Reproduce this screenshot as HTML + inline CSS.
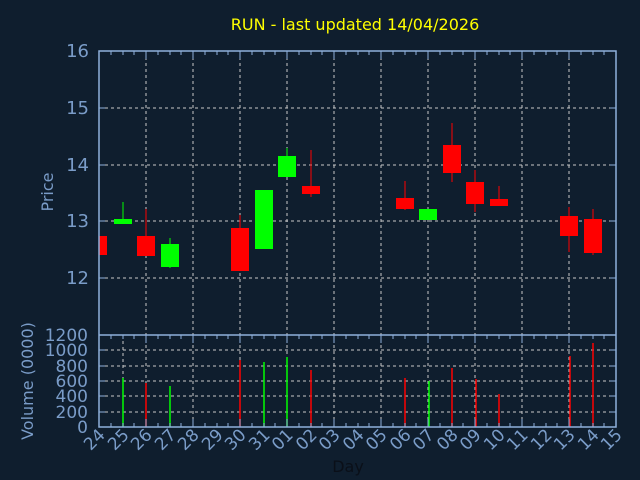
<!DOCTYPE html>
<html><head><style>
html,body{margin:0;padding:0;background:#0f1e2e;}
svg{display:block;font-family:"DejaVu Sans","Liberation Sans",sans-serif;}
</style></head><body>
<svg width="640" height="480" xmlns="http://www.w3.org/2000/svg">
<rect width="640" height="480" fill="#0f1e2e"/>
<text x="355" y="30" fill="#ffff00" font-size="16" text-anchor="middle">RUN - last updated 14/04/2026</text>
<g stroke="#c8c8c8" stroke-width="1" stroke-dasharray="3,3">
<line x1="99" x2="616" y1="108" y2="108"/><line x1="99" x2="616" y1="165" y2="165"/>
<line x1="99" x2="616" y1="221" y2="221"/><line x1="99" x2="616" y1="278" y2="278"/>
<line x1="99" x2="616" y1="350" y2="350"/><line x1="99" x2="616" y1="366" y2="366"/>
<line x1="99" x2="616" y1="381" y2="381"/><line x1="99" x2="616" y1="396" y2="396"/>
<line x1="99" x2="616" y1="412" y2="412"/>
<line x1="146" x2="146" y1="51" y2="427"/><line x1="193" x2="193" y1="51" y2="427"/>
<line x1="240" x2="240" y1="51" y2="427"/><line x1="287" x2="287" y1="51" y2="427"/>
<line x1="334" x2="334" y1="51" y2="427"/><line x1="381" x2="381" y1="51" y2="427"/>
<line x1="428" x2="428" y1="51" y2="427"/><line x1="475" x2="475" y1="51" y2="427"/>
<line x1="522" x2="522" y1="51" y2="427"/><line x1="569" x2="569" y1="51" y2="427"/>
<line x1="123" x2="123" y1="335" y2="427"/>
</g>
<g>
<rect x="99" y="236" width="8" height="19" fill="#ff0000"/>
<line x1="123" x2="123" y1="202" y2="224" stroke="#00ff00"/><rect x="114" y="219" width="18" height="5" fill="#00ff00"/>
<line x1="146" x2="146" y1="209" y2="256" stroke="#ff0000"/><rect x="137" y="236" width="18" height="20" fill="#ff0000"/>
<line x1="170" x2="170" y1="238" y2="268" stroke="#00ff00"/><rect x="161" y="244" width="18" height="23" fill="#00ff00"/>
<line x1="240" x2="240" y1="215" y2="271" stroke="#ff0000"/><rect x="231" y="228" width="18" height="43" fill="#ff0000"/>
<rect x="255" y="190" width="18" height="59" fill="#00ff00"/>
<line x1="287" x2="287" y1="148" y2="177" stroke="#00ff00"/><rect x="278" y="156" width="18" height="21" fill="#00ff00"/>
<line x1="311" x2="311" y1="150" y2="197" stroke="#ff0000"/><rect x="302" y="186" width="18" height="8" fill="#ff0000"/>
<line x1="405" x2="405" y1="181" y2="210" stroke="#ff0000"/><rect x="396" y="198" width="18" height="11" fill="#ff0000"/>
<rect x="419" y="209" width="18" height="11" fill="#00ff00"/>
<line x1="452" x2="452" y1="123" y2="182" stroke="#ff0000"/><rect x="443" y="145" width="18" height="28" fill="#ff0000"/>
<line x1="475" x2="475" y1="170" y2="212" stroke="#ff0000"/><rect x="466" y="182" width="18" height="22" fill="#ff0000"/>
<line x1="499" x2="499" y1="186" y2="206" stroke="#ff0000"/><rect x="490" y="199" width="18" height="7" fill="#ff0000"/>
<line x1="569" x2="569" y1="207" y2="252" stroke="#ff0000"/><rect x="560" y="216" width="18" height="20" fill="#ff0000"/>
<line x1="593" x2="593" y1="209" y2="255" stroke="#ff0000"/><rect x="584" y="219" width="18" height="34" fill="#ff0000"/>
</g>
<g stroke-width="1.5">
<line x1="123" x2="123" y1="378" y2="427" stroke="#00ff00"/>
<line x1="146" x2="146" y1="383" y2="427" stroke="#ff0000"/>
<line x1="170" x2="170" y1="386" y2="427" stroke="#00ff00"/>
<line x1="240" x2="240" y1="360" y2="427" stroke="#ff0000"/>
<line x1="264" x2="264" y1="362" y2="427" stroke="#00ff00"/>
<line x1="287" x2="287" y1="357" y2="427" stroke="#00ff00"/>
<line x1="311" x2="311" y1="370" y2="427" stroke="#ff0000"/>
<line x1="405" x2="405" y1="378" y2="427" stroke="#ff0000"/>
<line x1="429" x2="429" y1="381" y2="427" stroke="#00ff00"/>
<line x1="452" x2="452" y1="368" y2="427" stroke="#ff0000"/>
<line x1="476" x2="476" y1="379" y2="427" stroke="#ff0000"/>
<line x1="499" x2="499" y1="394" y2="427" stroke="#ff0000"/>
<line x1="570" x2="570" y1="356" y2="427" stroke="#ff0000"/>
<line x1="593" x2="593" y1="343" y2="427" stroke="#ff0000"/>
</g>
<g stroke="#8fb0dc" stroke-width="1.5" fill="none">
<rect x="99" y="51" width="517" height="376"/>
<line x1="99" x2="616" y1="335" y2="335"/>
</g>
<g stroke="#8fb0dc" stroke-width="1">
<path d="M99 108h6M99 165h6M99 221h6M99 278h6M616 108h-6M616 165h-6M616 221h-6M616 278h-6
M99 350h6M99 366h6M99 381h6M99 396h6M99 412h6M616 350h-6M616 366h-6M616 381h-6M616 396h-6M616 412h-6"/>
<path d="M146 51v8M193 51v8M240 51v8M287 51v8M334 51v8M381 51v8M428 51v8M475 51v8M522 51v8M569 51v8
M146 335v8M193 335v8M240 335v8M287 335v8M334 335v8M381 335v8M428 335v8M475 335v8M522 335v8M569 335v8
M146 427v-8M193 427v-8M240 427v-8M287 427v-8M334 427v-8M381 427v-8M428 427v-8M475 427v-8M522 427v-8M569 427v-8"/>
<path d="M111 51v4M123 51v4M134 51v4M158 51v4M170 51v4M181 51v4M205 51v4M217 51v4M228 51v4M252 51v4M264 51v4M275 51v4M299 51v4M311 51v4M322 51v4M346 51v4M358 51v4M369 51v4M393 51v4M405 51v4M416 51v4M440 51v4M452 51v4M463 51v4M487 51v4M499 51v4M510 51v4M534 51v4M546 51v4M557 51v4M581 51v4M593 51v4M604 51v4
M111 335v4M123 335v4M134 335v4M158 335v4M170 335v4M181 335v4M205 335v4M217 335v4M228 335v4M252 335v4M264 335v4M275 335v4M299 335v4M311 335v4M322 335v4M346 335v4M358 335v4M369 335v4M393 335v4M405 335v4M416 335v4M440 335v4M452 335v4M463 335v4M487 335v4M499 335v4M510 335v4M534 335v4M546 335v4M557 335v4M581 335v4M593 335v4M604 335v4
M111 427v-4M123 427v-4M134 427v-4M158 427v-4M170 427v-4M181 427v-4M205 427v-4M217 427v-4M228 427v-4M252 427v-4M264 427v-4M275 427v-4M299 427v-4M311 427v-4M322 427v-4M346 427v-4M358 427v-4M369 427v-4M393 427v-4M405 427v-4M416 427v-4M440 427v-4M452 427v-4M463 427v-4M487 427v-4M499 427v-4M510 427v-4M534 427v-4M546 427v-4M557 427v-4M581 427v-4M593 427v-4M604 427v-4"/>
</g>
<g fill="#7a9cc8" font-size="18" text-anchor="end">
<text x="89" y="57">16</text><text x="89" y="114">15</text><text x="89" y="171">14</text>
<text x="89" y="227">13</text><text x="89" y="284">12</text>
<text x="88" y="341" font-size="17">1200</text><text x="88" y="356" font-size="17">1000</text>
<text x="88" y="372" font-size="17">800</text><text x="88" y="387" font-size="17">600</text>
<text x="88" y="402" font-size="17">400</text><text x="88" y="418" font-size="17">200</text>
<text x="88" y="433" font-size="17">0</text>
</g>
<text transform="translate(53,192) rotate(-90)" fill="#7a9cc8" font-size="16" text-anchor="middle">Price</text>
<text transform="translate(33,381) rotate(-90)" fill="#7a9cc8" font-size="16" text-anchor="middle">Volume (0000)</text>
<text x="348" y="472" fill="#0a0f18" font-size="16" text-anchor="middle">Day</text>
<g fill="#7a9cc8" font-size="17" text-anchor="end">
<text transform="translate(106,436) rotate(-45)">24</text>
<text transform="translate(130,436) rotate(-45)">25</text>
<text transform="translate(153,436) rotate(-45)">26</text>
<text transform="translate(177,436) rotate(-45)">27</text>
<text transform="translate(200,436) rotate(-45)">28</text>
<text transform="translate(224,436) rotate(-45)">29</text>
<text transform="translate(247,436) rotate(-45)">30</text>
<text transform="translate(271,436) rotate(-45)">31</text>
<text transform="translate(294,436) rotate(-45)">01</text>
<text transform="translate(318,436) rotate(-45)">02</text>
<text transform="translate(341,436) rotate(-45)">03</text>
<text transform="translate(365,436) rotate(-45)">04</text>
<text transform="translate(388,436) rotate(-45)">05</text>
<text transform="translate(412,436) rotate(-45)">06</text>
<text transform="translate(435,436) rotate(-45)">07</text>
<text transform="translate(459,436) rotate(-45)">08</text>
<text transform="translate(482,436) rotate(-45)">09</text>
<text transform="translate(506,436) rotate(-45)">10</text>
<text transform="translate(529,436) rotate(-45)">11</text>
<text transform="translate(553,436) rotate(-45)">12</text>
<text transform="translate(576,436) rotate(-45)">13</text>
<text transform="translate(600,436) rotate(-45)">14</text>
<text transform="translate(623,436) rotate(-45)">15</text>
</g>
</svg>
</body></html>
